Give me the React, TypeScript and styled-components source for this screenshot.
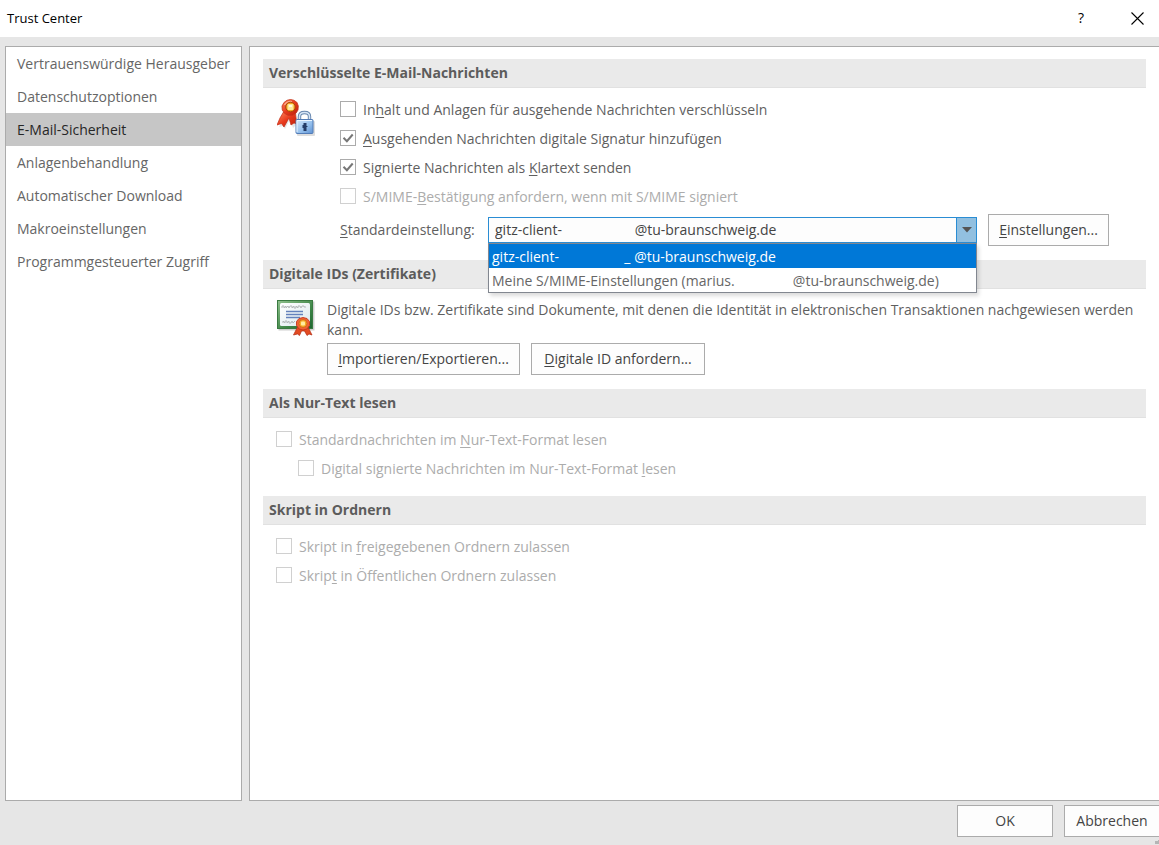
import React from "react";
import styled, { createGlobalStyle, css } from "styled-components";

const GlobalStyle = createGlobalStyle`
  *, *::before, *::after { box-sizing: border-box; }
  body {
    margin: 0;
    background: #e6e6e6;
    color: #5f5f5f;
    font: 14px/20px "Open Sans", "Noto Sans", sans-serif;
    overflow: hidden;
  }
  button, select, input { font: inherit; color: inherit; margin: 0; }
  u { text-decoration-thickness: 1px; text-underline-offset: 2px; }
`;

const Dialog = styled.div`
  display: flex;
  flex-direction: column;
  min-height: 100vh;
`;

const TitleBar = styled.header`
  display: flex;
  align-items: center;
  justify-content: space-between;
  height: 37px;
  padding: 0 12px 1px 7px;
  background: #fff;
  color: #000;
`;

const Title = styled.h1`
  margin: 0;
  font-size: 13px;
  font-weight: 400;
`;

const TitleActions = styled.div`
  display: flex;
  gap: 36px;
`;

const TitleButton = styled.button`
  display: flex;
  align-items: center;
  justify-content: center;
  width: 20px;
  height: 20px;
  padding: 0;
  border: 0;
  background: none;
`;

const Main = styled.div`
  display: flex;
  flex: 1;
  gap: 7px;
  padding: 9px 0 0 5px;
`;

const Sidebar = styled.nav`
  flex: none;
  width: 237px;
  border: 1px solid #ababab;
  background: #fff;
`;

const NavLink = styled.a<{ $active?: boolean }>`
  display: block;
  padding: 7px 11px 6px;
  color: ${(p) => (p.$active ? "#262626" : "#666")};
  background: ${(p) => (p.$active ? "#c6c6c6" : "transparent")};
  text-decoration: none;
  white-space: nowrap;
`;

const Content = styled.main`
  flex: 1;
  min-width: 0;
  padding: 12px 13px;
  border: 1px solid #ababab;
  border-right: 0;
  background: #fff;
`;

const Section = styled.section`
  margin-bottom: 13px;
`;

const SectionTitle = styled.h2`
  height: 29px;
  margin: 0;
  padding: 4px 6px;
  border-bottom: 1px solid #e1e1e1;
  background: #eaeaea;
  color: #5c5c5c;
  font-size: 14px;
  font-weight: 700;
`;

const SectionBody = styled.div<{ $gap?: number }>`
  display: flex;
  gap: ${(p) => p.$gap ?? 0}px;
  padding: 11px 0 1px 14px;
`;

const Options = styled.div<{ $inset?: boolean }>`
  flex: 1;
  min-width: 0;
  ${(p) => (p.$inset ? css`padding: 6px 13px 1px;` : css`margin-top: -5px;`)}
`;

const OptionLabel = styled.label<{ $disabled?: boolean; $nested?: boolean }>`
  display: flex;
  align-items: center;
  gap: 7px;
  height: 29px;
  padding-left: ${(p) => (p.$nested ? 22 : 0)}px;
  color: ${(p) => (p.$disabled ? "#acacac" : "#5f5f5f")};
`;

const OptionText = styled.span`
  padding-top: 2px;
`;

const Box = styled.span`
  display: grid;
  flex: none;
  width: 16px;
  height: 16px;
  > * { grid-area: 1 / 1; }
  svg { pointer-events: none; }
`;

const CheckInput = styled.input`
  appearance: none;
  width: 16px;
  height: 16px;
  border: 1px solid #ababab;
  background: #fff;
  &:disabled { border-color: #d0d0d0; }
  & + svg { visibility: hidden; }
  &:checked + svg { visibility: visible; }
`;

const SettingRow = styled.div`
  display: flex;
  align-items: center;
  gap: 11px;
  margin-top: 4px;
`;

const Combo = styled.div`
  position: relative;
  flex: none;
  width: 489px;
`;

const ComboSelect = styled.select`
  appearance: none;
  display: block;
  width: 100%;
  height: 26px;
  padding: 0 26px 0 6px;
  border: 1px solid #2a8dd4;
  border-radius: 0;
  background: #fdfdfd;
  color: #444;
  outline: 0;
`;

const ComboArrow = styled.span`
  position: absolute;
  top: 0;
  right: 0;
  display: flex;
  align-items: center;
  justify-content: center;
  width: 21px;
  height: 26px;
  border: 1px solid #2a8dd4;
  background: #92c0e0;
  pointer-events: none;
`;

const ComboList = styled.ul`
  position: absolute;
  top: 100%;
  left: 0;
  z-index: 1;
  width: 100%;
  margin: 0;
  padding: 0;
  border: 1px solid #828790;
  background: #fff;
  box-shadow: 2px 3px 4px rgba(0, 0, 0, 0.14);
  list-style: none;
`;

const ComboOption = styled.li<{ $active?: boolean }>`
  height: 24px;
  padding: 3px 3px 1px;
  background: ${(p) => (p.$active ? "#0078d7" : "#fff")};
  color: ${(p) => (p.$active ? "#fff" : "#666")};
  white-space: pre;
`;

const Button = styled.button<{ $width: number; $cut?: boolean }>`
  width: ${(p) => p.$width}px;
  height: 32px;
  padding: 0;
  border: 1px solid #ababab;
  ${(p) => p.$cut && css`border-right: 0;`}
  background: #fdfdfd;
  color: #444;
  white-space: nowrap;
`;

const SettingLabel = styled.label`
  flex: none;
  width: 137px;
`;

const Description = styled.p`
  margin: 0;
`;

const ButtonRow = styled.div`
  display: flex;
  gap: 11px;
  margin-top: 3px;
`;

const CertificateText = styled.div`
  flex: 1;
  min-width: 0;
`;

const Footer = styled.footer`
  display: flex;
  justify-content: flex-end;
  gap: 11px;
  height: 44px;
  padding-top: 4px;
`;

const Grip = styled.svg`
  position: absolute;
  right: 0;
  bottom: 0;
`;

const Art = styled.svg`
  flex: none;
  width: 38px;
  height: 39px;
`;

function Check() {
  return (
    <svg width="16" height="16" viewBox="0 0 16 16" fill="none" stroke="#777" strokeWidth="2">
      <path d="M3.5 7.700 6.900 11.200 12.700 4.500" />
    </svg>
  );
}

function SignedLockIcon() {
  return (
    <Art viewBox="0 0 38 39" aria-hidden="true">
      <defs>
        <linearGradient id="seal" x1="0" y1="0" x2="1" y2="1">
          <stop offset="0" stopColor="#ff8a60" />
          <stop offset=".5" stopColor="#e8391c" />
          <stop offset="1" stopColor="#b81e0c" />
        </linearGradient>
        <linearGradient id="lock" x1="0" y1="0" x2="1" y2="1">
          <stop offset="0" stopColor="#d7eafc" />
          <stop offset=".6" stopColor="#91bdeb" />
          <stop offset="1" stopColor="#5d8fd0" />
        </linearGradient>
      </defs>
      <path d="M8 14 4 21 1 27l4-1 2 3 5-10 3 9 3-3 3 2-2-13Z" fill="#ccc" opacity=".5" transform="translate(1 1)" />
      <path d="M6.500 13 3 19 0 26l4.500-1.500L7 28l5-9 2 7 3-2 3 1-2-12Z" fill="url(#seal)" stroke="#c22d16" strokeWidth=".7" />
      <path d="M13.500 .5 17 1.300l3 2.200 1.300 3.500L21 11l-2 3.300-3.500 2H11l-3.500-2L5.300 11 5 7l2-3.500 3-2.200Z" fill="url(#seal)" stroke="#c4351d" strokeWidth=".8" />
      <path d="M7.500 6Q10 2 15 2.500" fill="none" stroke="#ffb292" strokeWidth="1.200" />
      <circle cx="13.500" cy="8" r="4.800" fill="#f3a51c" stroke="#a84411" strokeWidth="1" />
      <rect x="10.500" y="5" width="6" height="6" rx="1" fill="#ffe99a" />
      <path d="M12 6h3v2h-3z" fill="#fffbe1" />
      <rect x="20" y="22" width="18" height="15" rx="1" fill="#aaa" opacity=".4" />
      <path d="M22.500 22v-4.500q0-4 5-4t5 4V22" fill="none" stroke="#6686ae" strokeWidth="3.400" />
      <path d="M22.500 22v-4.500q0-4 5-4t5 4V22" fill="none" stroke="#d6e5f5" strokeWidth="1.500" />
      <rect x="19" y="20.500" width="17" height="14" rx="1" fill="url(#lock)" stroke="#527cb7" />
      <path d="M20 33V21.500h15" fill="none" stroke="#ebf6ff" />
      <path d="M26.500 24h3v3h1v1h-1v4h-3v-3h-1v-3h1Z" fill="#243c67" />
    </Art>
  );
}

function CertificateIcon() {
  return (
    <Art viewBox="0 0 38 39" aria-hidden="true">
      <defs>
        <linearGradient id="frame" x1="0" y1="0" x2="1" y2="1">
          <stop offset="0" stopColor="#8fc08c" />
          <stop offset=".6" stopColor="#3f8748" />
          <stop offset="1" stopColor="#1d6530" />
        </linearGradient>
        <linearGradient id="paper" x1="0" y1="0" x2="1" y2="1">
          <stop offset="0" stopColor="#fff" />
          <stop offset="1" stopColor="#dce9ee" />
        </linearGradient>
      </defs>
      <rect x="1.500" y="1.500" width="36" height="29" fill="#888" opacity=".4" />
      <rect x=".5" y=".5" width="35" height="28" fill="url(#frame)" stroke="#397a41" />
      <rect x="3" y="3" width="30" height="23" rx="1.500" fill="url(#paper)" />
      <path d="M5 8v-2h2v2l2-2v2l2-2 1 2 1-2h2v2l2-2v2h2v-2l2 2v-2h2l1 2 1-2h2v1h2" fill="none" stroke="#b3b8ba" strokeWidth="1" />
      <path d="M9 11.500h17M9 14.500h17M9 17.500h14" fill="none" stroke="#6482bc" strokeWidth="1.400" />
      <path d="M6 23v-2l2 2v-2h2v2l2-2v2h2l1-2 1 2 2-2" fill="none" stroke="#b3b8ba" strokeWidth="1" />
      <path d="M20.500 27l-1.500 3-2.500 5 4-1 2 1.500 2-4.500h3l2.500 4.500 2-1.500 3 1-2.500-5-1.500-3Z" fill="#e34b22" stroke="#b22b12" strokeWidth=".7" />
      <path d="M26 17.500l4 1 2.500 3v4l-2.500 3.500-4 1-4-1-2.500-3.500v-4l2.500-3Z" fill="#ef6236" stroke="#c7371a" strokeWidth=".9" />
      <circle cx="26" cy="23.500" r="4" fill="#f6ad27" stroke="#ce6117" strokeWidth=".8" />
      <rect x="24" y="21.500" width="4" height="4" rx="1" fill="#ffeda0" />
    </Art>
  );
}

interface OptionProps {
  checked?: boolean;
  disabled?: boolean;
  nested?: boolean;
  children: React.ReactNode;
}

function Option({ checked, disabled, nested, children }: OptionProps) {
  return (
    <OptionLabel $disabled={disabled} $nested={nested}>
      <Box>
        <CheckInput type="checkbox" defaultChecked={checked} disabled={disabled} />
        <Check />
      </Box>
      <OptionText>{children}</OptionText>
    </OptionLabel>
  );
}

const pages = [
  "Vertrauenswürdige Herausgeber",
  "Datenschutzoptionen",
  "E-Mail-Sicherheit",
  "Anlagenbehandlung",
  "Automatischer Download",
  "Makroeinstellungen",
  "Programmgesteuerter Zugriff",
];

const blank = (count: number) => "\u00a0".repeat(count);

export default function App() {
  return (
    <Dialog>
      <GlobalStyle />
      <TitleBar>
        <Title>Trust Center</Title>
        <TitleActions>
          <TitleButton aria-label="Hilfe">?</TitleButton>
          <TitleButton aria-label="Schließen">
            <svg width="13" height="13" viewBox="0 0 13 13" stroke="#000" strokeWidth="1.100">
              <path d="M.5.5l12 12M12.500.5l-12 12" />
            </svg>
          </TitleButton>
        </TitleActions>
      </TitleBar>
      <Main>
        <Sidebar>
          {pages.map((page) => (
            <NavLink key={page} href="#" $active={page === "E-Mail-Sicherheit"}>
              {page}
            </NavLink>
          ))}
        </Sidebar>
        <Content>
          <Section>
            <SectionTitle>Verschlüsselte E-Mail-Nachrichten</SectionTitle>
            <SectionBody $gap={25}>
              <SignedLockIcon />
              <Options>
                <Option>In<u>h</u>alt und Anlagen für ausgehende Nachrichten verschlüsseln</Option>
                <Option checked><u>A</u>usgehenden Nachrichten digitale Signatur hinzufügen</Option>
                <Option checked>Signierte Nachrichten als <u>K</u>lartext senden</Option>
                <Option disabled>S/MIME-<u>B</u>estätigung anfordern, wenn mit S/MIME signiert</Option>
                <SettingRow>
                  <SettingLabel htmlFor="profile"><u>S</u>tandardeinstellung:</SettingLabel>
                  <Combo>
                    <ComboSelect id="profile">
                      <option>{`gitz-client-${blank(20)}@tu-braunschweig.de`}</option>
                    </ComboSelect>
                    <ComboArrow>
                      <svg width="10" height="6" viewBox="0 0 10 6"><path d="M0 0h10L5 5.500Z" fill="#555" /></svg>
                    </ComboArrow>
                    <ComboList role="listbox">
                      <ComboOption role="option" aria-selected="true" $active>
                        {`gitz-client-${blank(18)}_ @tu-braunschweig.de`}
                      </ComboOption>
                      <ComboOption role="option" aria-selected="false">
                        {`Meine S/MIME-Einstellungen (marius.${blank(16)}@tu-braunschweig.de)`}
                      </ComboOption>
                    </ComboList>
                  </Combo>
                  <Button $width={121}><u>E</u>instellungen...</Button>
                </SettingRow>
              </Options>
            </SectionBody>
          </Section>
          <Section>
            <SectionTitle>Digitale IDs (Zertifikate)</SectionTitle>
            <SectionBody $gap={12}>
              <CertificateIcon />
              <CertificateText>
                <Description>
                  Digitale IDs bzw. Zertifikate sind Dokumente, mit denen die Identität in elektronischen Transaktionen nachgewiesen werden kann.
                </Description>
                <ButtonRow>
                  <Button $width={193}><u>I</u>mportieren/Exportieren...</Button>
                  <Button $width={174}><u>D</u>igitale ID anfordern...</Button>
                </ButtonRow>
              </CertificateText>
            </SectionBody>
          </Section>
          <Section>
            <SectionTitle>Als Nur-Text lesen</SectionTitle>
            <Options $inset>
              <Option disabled>Standardnachrichten im <u>N</u>ur-Text-Format lesen</Option>
              <Option disabled nested>Digital signierte Nachrichten im Nur-Text-Format <u>l</u>esen</Option>
            </Options>
          </Section>
          <Section>
            <SectionTitle>Skript in Ordnern</SectionTitle>
            <Options $inset>
              <Option disabled>Skript in <u>f</u>reigegebenen Ordnern zulassen</Option>
              <Option disabled>Skrip<u>t</u> in Öffentlichen Ordnern zulassen</Option>
            </Options>
          </Section>
        </Content>
      </Main>
      <Footer>
        <Button $width={96}>OK</Button>
        <Button $width={95} $cut>Abbrechen</Button>
      </Footer>
      <Grip width="5" height="5" viewBox="0 0 5 5" fill="#b5b5b5" aria-hidden="true">
        <path d="M1 1h3v3H1zM4 0h1v4H4z" />
      </Grip>
    </Dialog>
  );
}
